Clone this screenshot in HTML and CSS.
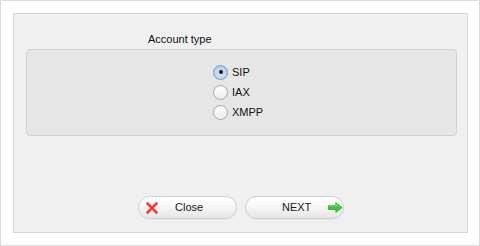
FILE: index.html
```html
<!DOCTYPE html>
<html>
<head>
<meta charset="utf-8">
<link rel="stylesheet" href="styles.css">
</head>
<body>
<div class="frame">
  <div class="panel">
    <div class="title">Account type</div>
    <div class="group">
      <label class="row"><span class="radio checked"><span class="dot"></span></span><span class="lbl">SIP</span></label>
      <label class="row"><span class="radio"></span><span class="lbl">IAX</span></label>
      <label class="row"><span class="radio"></span><span class="lbl">XMPP</span></label>
    </div>
    <div class="buttons">
      <div class="btn close">
        <svg class="xicon" width="12" height="12" viewBox="0 0 12 12"><path d="M1.5 1.5 L10.5 10.5 M10.5 1.5 L1.5 10.5" stroke="#ee3b3b" stroke-width="2.6" stroke-linecap="round"/></svg>
        <span class="btxt">Close</span>
      </div>
      <div class="btn next">
        <span class="btxt">NEXT</span>
        <svg class="arrow" width="15" height="11" viewBox="0 0 15 11"><path d="M0.5 3.5 H8 V0.5 L14.5 5.5 L8 10.5 V7.5 H0.5 Z" fill="#3cc23c" stroke="#2ea52e" stroke-width="0.8" stroke-linejoin="round"/><path d="M1 4 H8.5 V2 L12 4.8" fill="none" stroke="#8de48d" stroke-width="0.8"/></svg>
      </div>
    </div>
  </div>
</div>
</body>
</html>
```

FILE: styles.css
```css
html, body {
  margin: 0;
  padding: 0;
  background: #ffffff;
}
body {
  font-family: "Liberation Sans", Arial, sans-serif;
  font-size: 11px;
  color: #111;
}
.frame {
  width: 480px;
  height: 246px;
  box-sizing: border-box;
  border: 1px solid #dcdcdc;
  padding: 12px;
}
.panel {
  width: 455px;
  height: 220px;
  box-sizing: border-box;
  background: #f0f0f0;
  border: 1px solid #d6d6d6;
  padding-top: 19px;
}
.title {
  line-height: 13px;
  height: 13px;
  padding-left: 134px;
  margin-bottom: 3px;
  color: #111;
}
.group {
  margin-left: 12px;
  width: 431px;
  box-sizing: border-box;
  background: #e6e6e6;
  border: 1px solid #d2d2d2;
  border-radius: 4px;
  padding: 12px 0 13px 186px;
}
.row {
  display: flex;
  align-items: center;
  height: 20px;
}
.radio {
  width: 15px;
  height: 15px;
  box-sizing: border-box;
  border-radius: 50%;
  border: 1px solid #a9a9a9;
  background: linear-gradient(#ffffff, #ececec);
  box-shadow: inset 0 1px 1px rgba(0,0,0,0.05);
  display: flex;
  align-items: center;
  justify-content: center;
  margin-right: 4px;
}
.radio.checked {
  border-color: #7c99bb;
  background: radial-gradient(circle at 50% 60%, #d6e8fb, #b4cfef 70%, #a6c4e8);
}
.dot {
  width: 4px;
  height: 4px;
  border-radius: 50%;
  background: #111;
}
.lbl {
  line-height: 13px;
  color: #111;
}
.buttons {
  display: flex;
  gap: 8px;
  padding-left: 124px;
  margin-top: 60px;
}
.btn {
  width: 99px;
  height: 23px;
  box-sizing: border-box;
  border-radius: 12px;
  border: 1px solid #cfcfcf;
  background: linear-gradient(#ffffff 0%, #f6f6f6 45%, #e6e6e6 100%);
  box-shadow: 0 1px 1px rgba(0,0,0,0.04);
  display: flex;
  align-items: center;
  position: relative;
}
.btxt {
  line-height: 13px;
  color: #1a1a1a;
}
.close .xicon {
  margin-left: 7px;
}
.close .btxt {
  margin-left: 17px;
}
.next .btxt {
  margin-left: 36px;
}
.next .arrow {
  margin-left: 17px;
}
```
